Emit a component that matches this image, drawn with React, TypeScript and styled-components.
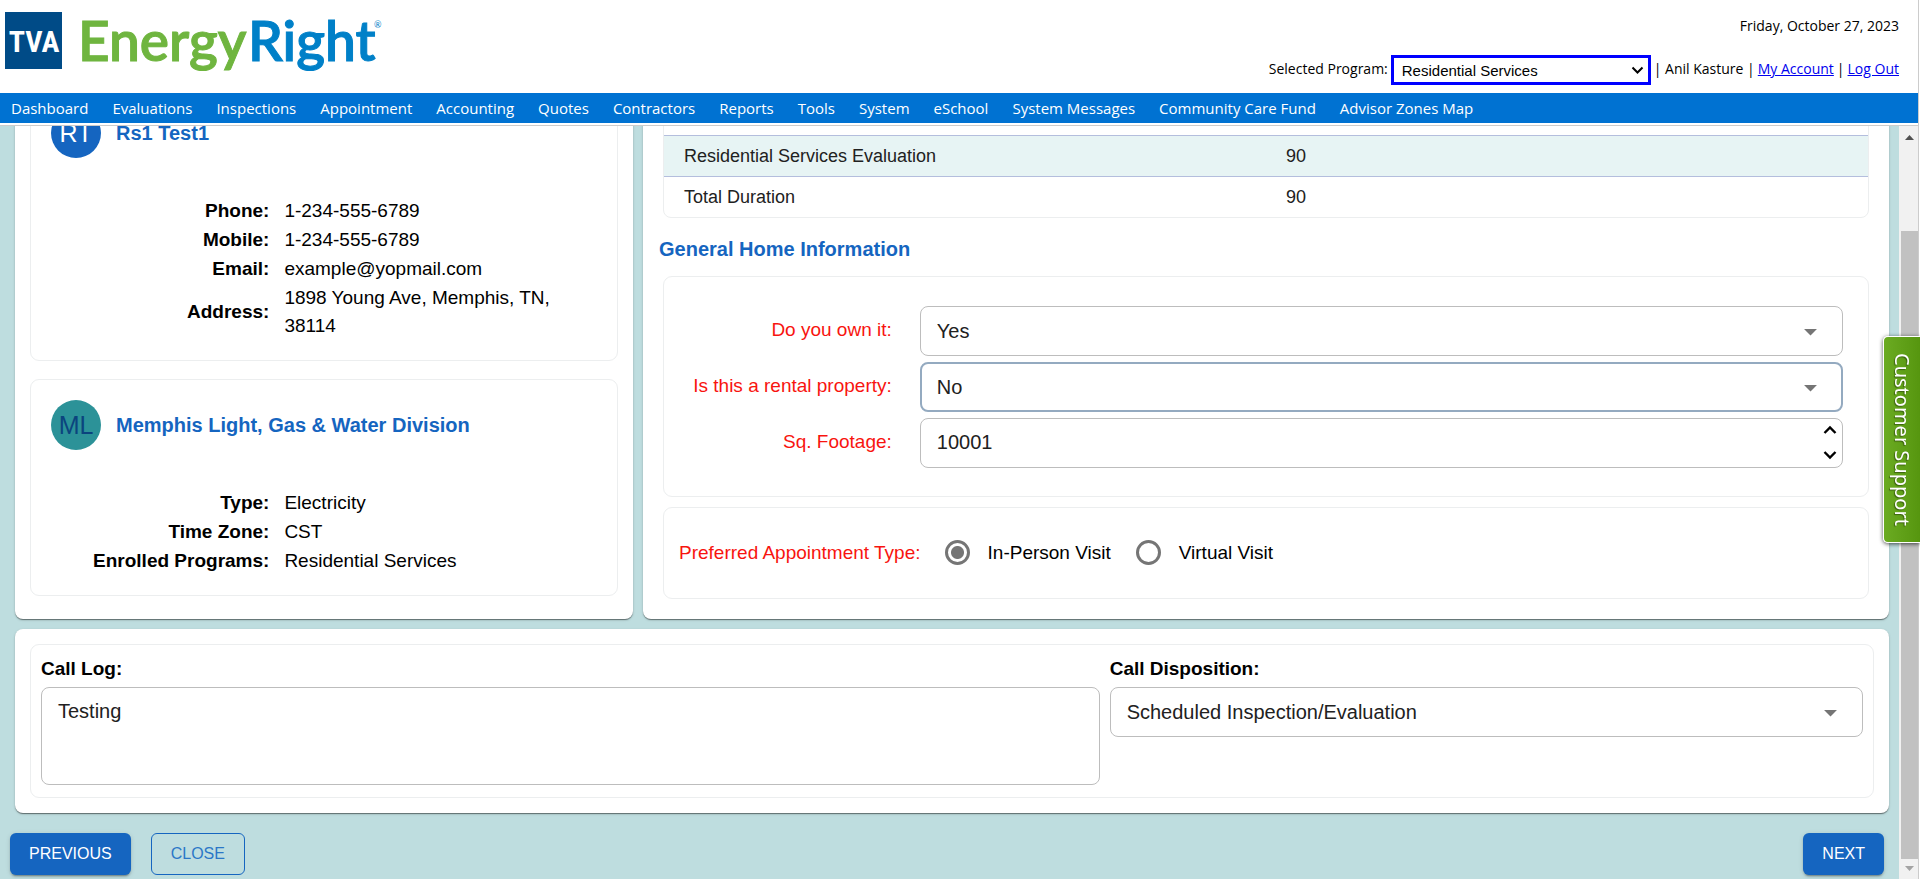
import React, { useId, useLayoutEffect, useRef, useState } from "react";
import styled, { createGlobalStyle, css } from "styled-components";

const blue = "#1565c0";

const GlobalStyle = createGlobalStyle`
  *, *::before, *::after { box-sizing: border-box; }
  body {
    margin: 0;
    background: #fff;
    color: #000;
    font-family: "Liberation Sans", Arial, sans-serif;
    font-size: 19px;
  }
`;

const Page = styled.div`
  display: flex;
  flex-direction: column;
  height: 100vh;
  margin-right: 1px;
  border-right: 1px solid #ccc;
  overflow: hidden;
`;

/* ---------- header ---------- */

const Header = styled.header`
  display: flex;
  justify-content: space-between;
  flex: none;
  height: 93px;
  padding-right: 19px;
  font: 14px/20px "Open Sans", "Noto Sans", sans-serif;
`;

const Logo = styled.svg`
  display: block;
  width: 400px;
  height: 93px;
`;

const HeaderInfo = styled.div`
  display: flex;
  flex-direction: column;
  align-items: flex-end;
  gap: 19px;
  padding-top: 16px;
`;

const AccountLine = styled.div`
  display: flex;
  align-items: flex-start;
  gap: 3px;
  line-height: 28px;
`;

const AccountLink = styled.a`
  color: #00e;
`;

const ProgramSelectBox = styled.span`
  position: relative;
  display: block;
  width: 260px;
  height: 30px;
`;

const ProgramSelect = styled.select`
  display: block;
  width: 100%;
  height: 100%;
  padding: 0 8px;
  border: 3px solid #00f;
  border-radius: 0;
  appearance: none;
  background: #fff;
  color: #000;
  font: 15px "Liberation Sans", Arial, sans-serif;
`;

const ProgramChevron = styled.svg`
  position: absolute;
  top: 10px;
  right: 7px;
  width: 13px;
  height: 10px;
  pointer-events: none;
`;

/* ---------- navigation ---------- */

const Nav = styled.nav`
  flex: none;
  height: 33px;
  padding-bottom: 2px;
  border-bottom: 1px solid #ccc;
`;

const NavList = styled.ul`
  display: flex;
  gap: 24px;
  height: 30px;
  margin: 0;
  padding: 0 11px;
  list-style: none;
  background: #0072d2;
`;

const NavLink = styled.a`
  color: #fff;
  font: 15px/30px "Open Sans", "Noto Sans", sans-serif;
  text-decoration: none;
  white-space: nowrap;
`;

/* ---------- scrolling body ---------- */

const Body = styled.div`
  display: flex;
  flex: 1;
  min-height: 0;
`;

const ScrollArea = styled.main`
  flex: 1;
  min-width: 0;
  overflow-y: auto;
  scrollbar-width: none;
  background: #bedddf;
`;

const Content = styled.div`
  display: grid;
  grid-template-columns: repeat(3, minmax(0, 1fr));
  gap: 10px;
  padding: 10px 10px 0 15px;
`;

const ScrollTrack = styled.div`
  display: flex;
  flex-direction: column;
  flex: none;
  width: 19px;
  padding-left: 2px;
  background: #f1f1f1;
`;

const TrackArrow = styled.svg`
  flex: none;
  width: 17px;
  height: 20px;
`;

const TrackSpace = styled.div`
  flex: 12;
`;

const TrackThumb = styled.div`
  flex: 89;
  background: #c1c1c1;
`;

const Panel = styled.section<{ $span?: number; $pad: string }>`
  display: flex;
  flex-direction: column;
  grid-column: span ${(p) => p.$span ?? 1};
  padding: ${(p) => p.$pad};
  border-radius: 8px;
  background: #fff;
  box-shadow:
    0 2px 1px -1px rgba(0, 0, 0, 0.2),
    0 1px 1px rgba(0, 0, 0, 0.3),
    0 1px 3px rgba(0, 0, 0, 0.14);
`;

const Card = styled.div<{ $pad: string; $gap?: number }>`
  margin-top: ${(p) => p.$gap ?? 0}px;
  padding: ${(p) => p.$pad};
  border: 1px solid #eceeef;
  border-radius: 9px;
`;

const cardTitle = css`
  margin: 0;
  color: ${blue};
  font-size: 20px;
  font-weight: 700;
  line-height: 30px;
`;

const CardHead = styled.div`
  display: flex;
  align-items: center;
  gap: 15px;
  margin-bottom: 39px;
`;

const CardTitle = styled.h2`
  ${cardTitle}
`;

const Avatar = styled.div<{ $bg: string; $fg: string }>`
  width: 50px;
  height: 50px;
  border-radius: 50%;
  background: ${(p) => p.$bg};
  color: ${(p) => p.$fg};
  font-size: 25px;
  line-height: 50px;
  text-align: center;
`;

const Facts = styled.dl`
  display: grid;
  grid-template-columns: 40% 1fr;
  align-items: center;
  gap: 1px 15px;
  margin: 0;
  line-height: 28px;
`;

const FactName = styled.dt`
  font-weight: 700;
  text-align: right;
`;

const FactValue = styled.dd`
  margin: 0;
`;

/* ---------- services table ---------- */

const TableFrame = styled.div`
  border: 1px solid #eceeef;
  border-radius: 8px;
`;

const Table = styled.table`
  width: 100%;
  border-collapse: collapse;
  table-layout: fixed;
  color: #212121;
  font-size: 18px;
  line-height: 40px;

  th { height: 42px; border-bottom: 1px solid #b4bedd; }
  td { padding: 0 20px; }
  tbody tr:first-child td { border-bottom: 1px solid #b4bedd; background: #e7f4f4; }
`;

const SectionTitle = styled.h2`
  ${cardTitle}
  margin: 16px 0 12px -4px;
`;

/* ---------- form ---------- */

const FormGrid = styled.div`
  display: grid;
  grid-template-columns: 20% 1fr;
  gap: 6px 20px;
`;

const FieldLabel = styled.label`
  padding-right: 8px;
  color: #f8140f;
  line-height: 48px;
  text-align: right;
`;

const control = css`
  display: block;
  width: 100%;
  margin: 0;
  border: 1px solid #bdbdbd;
  border-radius: 8px;
  outline: none;
  appearance: none;
  background: #fff;
  color: #212121;
  font: 20px/28px "Liberation Sans", Arial, sans-serif;
`;

const ControlBox = styled.div`
  position: relative;
`;

const Select = styled.select<{ $active?: boolean }>`
  ${control}
  height: 50px;
  padding: 0 ${(p) => (p.$active ? 15 : 16)}px;
  ${(p) => p.$active && "border: 2px solid #94aac0;"}
`;

const NumberInput = styled.input`
  ${control}
  height: 50px;
  padding: 0 40px 0 16px;
`;

const TextArea = styled.textarea`
  ${control}
  height: 98px;
  padding: 9px 16px;
  resize: none;
`;

const Caret = styled.svg`
  position: absolute;
  top: 10px;
  right: 17px;
  width: 31px;
  height: 31px;
  fill: #757575;
  pointer-events: none;
`;

const Stepper = styled.div`
  position: absolute;
  top: 0;
  right: 1px;
  display: flex;
  flex-direction: column;
  width: 24px;
  height: 50px;
`;

const StepButton = styled.button`
  display: grid;
  flex: 1;
  place-items: center;
  padding: 0;
  border: 0;
  background: none;
`;

const ChevronIcon = styled.svg`
  display: block;
  width: 14px;
  height: 10px;
  fill: none;
  stroke: #000;
  stroke-width: 2.4;
`;

const RadioGroup = styled.fieldset`
  display: flex;
  align-items: center;
  margin: 0;
  padding: 0;
  border: 0;
  line-height: 30px;
`;

const RadioLegend = styled.span`
  margin-right: 24px;
  color: #f8140f;
`;

const RadioLabel = styled.label`
  display: flex;
  align-items: center;
  gap: 18px;
  margin-right: 25px;
`;

const Radio = styled.input`
  display: block;
  width: 25px;
  height: 25px;
  margin: 0;
  border: 3px solid #757575;
  border-radius: 50%;
  appearance: none;
  background: #fff;

  &:checked {
    background: radial-gradient(circle, #757575 6px, #fff 7px);
  }
`;

/* ---------- call log ---------- */

const CallGrid = styled.div`
  display: grid;
  grid-template-columns: repeat(12, minmax(0, 1fr));
  gap: 10px;
`;

const CallField = styled.div<{ $span: number }>`
  grid-column: span ${(p) => p.$span};
`;

const CallLabel = styled.label`
  display: block;
  padding-bottom: 4px;
  font-weight: 700;
  line-height: 28px;
`;

const Actions = styled.div`
  display: flex;
  align-items: center;
  gap: 20px;
  padding: 20px 15px 4px 10px;
`;

const Button = styled.button<{ $outlined?: boolean; $end?: boolean }>`
  height: 42px;
  padding: 0 19px;
  border: 0;
  border-radius: 6px;
  background: ${blue};
  color: #fff;
  font: 500 16px "Liberation Sans", Arial, sans-serif;
  text-transform: uppercase;
  box-shadow:
    0 3px 1px -2px rgba(0, 0, 0, 0.2),
    0 2px 2px rgba(0, 0, 0, 0.14),
    0 1px 5px rgba(0, 0, 0, 0.12);
  ${(p) => p.$end && "margin-left: auto;"}
  ${(p) =>
    p.$outlined &&
    css`
      border: 1px solid ${blue};
      background: none;
      color: #2b77c7;
      box-shadow: none;
    `}
`;

const SupportTab = styled.button`
  position: fixed;
  top: 336px;
  right: 0;
  width: 37px;
  height: 207px;
  padding: 0;
  border: 1px solid #fff;
  border-right: 0;
  border-radius: 5px 0 0 5px;
  background: linear-gradient(90deg, #6bab22, #56960f);
  box-shadow: 0 1px 4px rgba(0, 0, 0, 0.7);
  color: #fff;
  font: 20px/36px "Noto Sans", "Open Sans", sans-serif;
  text-shadow: 1px 1px 1px rgba(0, 0, 0, 0.4);
  white-space: nowrap;
  writing-mode: vertical-rl;
`;

const navItems = [
  "Dashboard",
  "Evaluations",
  "Inspections",
  "Appointment",
  "Accounting",
  "Quotes",
  "Contractors",
  "Reports",
  "Tools",
  "System",
  "eSchool",
  "System Messages",
  "Community Care Fund",
  "Advisor Zones Map",
];

function BrandLogo() {
  return (
    <Logo viewBox="0 0 400 93" role="img" aria-label="TVA EnergyRight">
      <rect x="5" y="12" width="57" height="57" fill="#004b87" />
      <text
        x="34"
        y="52"
        textAnchor="middle"
        fill="#fff"
        fontFamily="Roboto Condensed, Roboto, sans-serif"
        fontSize="30"
        fontWeight="700"
      >
        TVA
      </text>
      <g fontFamily="Lato, sans-serif" fontSize="55" fontWeight="600" strokeWidth="1">
        <text x="78" y="61" fill="#6fb53f" stroke="#6fb53f">
          Energy
        </text>
        <text x="248" y="61" fill="#0080c8" stroke="#0080c8">
          Right
        </text>
      </g>
      <text x="374" y="28" fill="#0080c8" fontFamily="Lato, sans-serif" fontSize="9">
        ®
      </text>
    </Logo>
  );
}

function Chevron({ down }: { down?: boolean }) {
  return (
    <ChevronIcon viewBox="0 0 14 10" aria-hidden="true">
      <path d={down ? "M1.5 2 7 7.5 12.5 2" : "M1.5 8 7 2.5 12.5 8"} />
    </ChevronIcon>
  );
}

function SelectField({ id, value, active }: { id: string; value: string; active?: boolean }) {
  return (
    <ControlBox>
      <Select id={id} $active={active} defaultValue={value}>
        <option>{value}</option>
      </Select>
      <Caret viewBox="0 0 24 24" aria-hidden="true">
        <path d="M7 10l5 5 5-5z" />
      </Caret>
    </ControlBox>
  );
}

function FactList({ items }: { items: [string, string][] }) {
  return (
    <Facts>
      {items.map(([name, value]) => (
        <React.Fragment key={name}>
          <FactName>{name}:</FactName>
          <FactValue>{value}</FactValue>
        </React.Fragment>
      ))}
    </Facts>
  );
}

export default function App() {
  const id = useId();
  const scroller = useRef<HTMLElement>(null);
  const [visit, setVisit] = useState("In-Person Visit");
  const [footage, setFootage] = useState(10001);

  useLayoutEffect(() => {
    const el = scroller.current;
    if (el) el.scrollTop = el.scrollHeight;
  }, []);

  return (
    <>
      <GlobalStyle />
      <Page>
        <Header>
          <BrandLogo />
          <HeaderInfo>
            <div>Friday, October 27, 2023</div>
            <AccountLine>
              <label htmlFor={`${id}-program`}>Selected Program:</label>
              <ProgramSelectBox>
                <ProgramSelect id={`${id}-program`}>
                  <option>Residential Services</option>
                </ProgramSelect>
                <ProgramChevron viewBox="0 0 13 10" aria-hidden="true">
                  <path d="M1.5 2.5 6.5 7.5 11.5 2.5" fill="none" stroke="#000" strokeWidth="2" />
                </ProgramChevron>
              </ProgramSelectBox>
              <span>| Anil Kasture |</span>
              <AccountLink href="#account">My Account</AccountLink>
              <span>|</span>
              <AccountLink href="#logout">Log Out</AccountLink>
            </AccountLine>
          </HeaderInfo>
        </Header>

        <Nav>
          <NavList>
            {navItems.map((item) => (
              <li key={item}>
                <NavLink href="#">{item}</NavLink>
              </li>
            ))}
          </NavList>
        </Nav>

        <Body>
          <ScrollArea ref={scroller}>
            <Content>
              <Panel $pad="15px 15px 22px">
                <Card $pad="20px">
                  <CardHead>
                    <Avatar $bg={blue} $fg="#fff">RT</Avatar>
                    <CardTitle>Rs1 Test1</CardTitle>
                  </CardHead>
                  <FactList
                    items={[
                      ["Phone", "1-234-555-6789"],
                      ["Mobile", "1-234-555-6789"],
                      ["Email", "example@yopmail.com"],
                      ["Address", "1898 Young Ave, Memphis, TN, 38114"],
                    ]}
                  />
                </Card>
                <Card $pad="20px" $gap={18}>
                  <CardHead>
                    <Avatar $bg="#2c9298" $fg="#0b447e">ML</Avatar>
                    <CardTitle>Memphis Light, Gas &amp; Water Division</CardTitle>
                  </CardHead>
                  <FactList
                    items={[
                      ["Type", "Electricity"],
                      ["Time Zone", "CST"],
                      ["Enrolled Programs", "Residential Services"],
                    ]}
                  />
                </Card>
              </Panel>

              <Panel $span={2} $pad="20px">
                <TableFrame>
                  <Table>
                    <thead>
                      <tr>
                        <th scope="col" aria-label="Service" />
                        <th scope="col" aria-label="Minutes" />
                      </tr>
                    </thead>
                    <tbody>
                      <tr>
                        <td>Residential Services Evaluation</td>
                        <td>90</td>
                      </tr>
                      <tr>
                        <td>Total Duration</td>
                        <td>90</td>
                      </tr>
                    </tbody>
                  </Table>
                </TableFrame>

                <SectionTitle>General Home Information</SectionTitle>
                <Card $pad="29px 25px 28px 0">
                  <FormGrid>
                    <FieldLabel htmlFor={`${id}-own`}>Do you own it:</FieldLabel>
                    <SelectField id={`${id}-own`} value="Yes" />
                    <FieldLabel htmlFor={`${id}-rental`}>Is this a rental property:</FieldLabel>
                    <SelectField id={`${id}-rental`} value="No" active />
                    <FieldLabel htmlFor={`${id}-footage`}>Sq. Footage:</FieldLabel>
                    <ControlBox>
                      <NumberInput
                        id={`${id}-footage`}
                        inputMode="numeric"
                        value={footage}
                        onChange={(e) => setFootage(Number(e.target.value) || 0)}
                      />
                      <Stepper>
                        <StepButton aria-label="Increase" onClick={() => setFootage(footage + 1)}>
                          <Chevron />
                        </StepButton>
                        <StepButton aria-label="Decrease" onClick={() => setFootage(footage - 1)}>
                          <Chevron down />
                        </StepButton>
                      </Stepper>
                    </ControlBox>
                  </FormGrid>
                </Card>

                <Card $pad="30px 15px" $gap={10}>
                  <RadioGroup aria-labelledby={`${id}-visit`}>
                    <RadioLegend id={`${id}-visit`}>Preferred Appointment Type:</RadioLegend>
                    {["In-Person Visit", "Virtual Visit"].map((option) => (
                      <RadioLabel key={option}>
                        <Radio
                          type="radio"
                          name="visit"
                          checked={visit === option}
                          onChange={() => setVisit(option)}
                        />
                        {option}
                      </RadioLabel>
                    ))}
                  </RadioGroup>
                </Card>
              </Panel>

              <Panel $span={3} $pad="15px">
                <Card $pad="10px 10px 12px">
                  <CallGrid>
                    <CallField $span={7}>
                      <CallLabel htmlFor={`${id}-log`}>Call Log:</CallLabel>
                      <TextArea id={`${id}-log`} defaultValue="Testing" />
                    </CallField>
                    <CallField $span={5}>
                      <CallLabel htmlFor={`${id}-disposition`}>Call Disposition:</CallLabel>
                      <SelectField id={`${id}-disposition`} value="Scheduled Inspection/Evaluation" />
                    </CallField>
                  </CallGrid>
                </Card>
              </Panel>
            </Content>

            <Actions>
              <Button>Previous</Button>
              <Button $outlined>Close</Button>
              <Button $end>Next</Button>
            </Actions>
          </ScrollArea>

          <ScrollTrack aria-hidden="true">
            <TrackArrow viewBox="0 0 17 20">
              <path d="M4 14h9l-4.500-5z" fill="#505050" />
            </TrackArrow>
            <TrackSpace />
            <TrackThumb />
            <TrackArrow viewBox="0 0 17 20">
              <path d="M4 7h9l-4.500 5z" fill="#a3a3a3" />
            </TrackArrow>
          </ScrollTrack>
        </Body>

        <SupportTab>Customer Support</SupportTab>
      </Page>
    </>
  );
}
